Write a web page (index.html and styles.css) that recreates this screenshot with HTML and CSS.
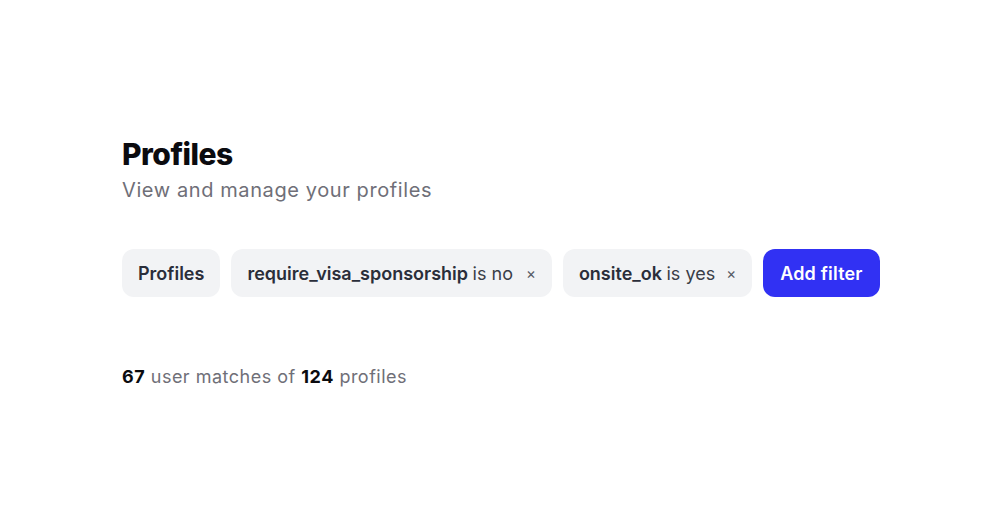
FILE: index.html
```html
<!DOCTYPE html>
<html>
<head>
<meta charset="utf-8">
<link rel="stylesheet" href="styles.css">
</head>
<body>
<main class="page">
  <h1 class="title">Profiles</h1>
  <p class="subtitle">View and manage your profiles</p>
  <div class="filters">
    <span class="chip">Profiles</span>
    <span class="chip"><b>require_visa_sponsorship</b>&nbsp;<span class="op">is no</span><span class="x">×</span></span>
    <span class="chip"><b>onsite_ok</b>&nbsp;<span class="op">is yes</span><span class="x">×</span></span>
    <button class="add">Add filter</button>
  </div>
  <p class="count"><b>67</b> user matches of <b>124</b> profiles</p>
</main>
</body>
</html>
```
FILE: styles.css
```css
html, body { margin: 0; padding: 0; background: #fff; }
body { font-family: Inter, "Noto Sans", sans-serif; }
.page { padding: 136px 0 0 122px; }
.title { margin: 0; font-size: 30px; font-weight: 800; color: #0b0b0f; letter-spacing: -0.5px; line-height: 36px; }
.subtitle { margin: 4px 0 0; font-size: 20px; color: #6f6f78; line-height: 28px; letter-spacing: 0.6px; }
.filters { display: flex; gap: 11px; margin-top: 45px; }
.chip { display: inline-flex; align-items: center; height: 48px; padding: 0 16px; border-radius: 12px; background: #f2f3f5; font-size: 18px; font-weight: 600; color: #2a2e3a; box-sizing: border-box; }
.chip b { font-weight: 600; }
.op { font-weight: 400; color: #3a3e48; }
.x { margin-left: 13px; font-size: 15px; color: #555a64; font-weight: 400; }
.chip:nth-child(3) .x { margin-left: 11px; }
.add { height: 48px; padding: 0 17px; border: 0; border-radius: 12px; background: #3131f3; color: #fff; font-family: inherit; font-size: 18px; font-weight: 600; letter-spacing: 0.2px; }
.count { margin: 67px 0 0; font-size: 18px; color: #6f6f78; line-height: 26px; letter-spacing: 0.5px; }
.count b { color: #0b0b0f; font-weight: 700; }
```
